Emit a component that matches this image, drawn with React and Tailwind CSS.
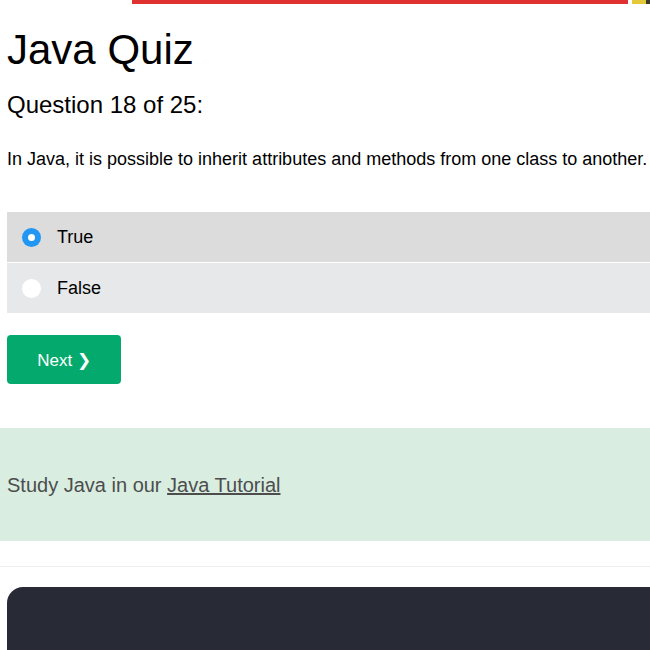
import React, { useState } from 'react';

const options = ['True', 'False'];

const App = () => {
  const [answer, setAnswer] = useState('True');

  return (
    <div className="w-[650px] h-[650px] overflow-hidden bg-white text-black font-['Liberation_Sans',Arial,sans-serif]">
      {/* top banner edge */}
      <div className="flex h-[4px]">
        <div className="w-[132px]" />
        <div className="w-[496px] bg-[#e03131]" />
        <div className="w-[4px] bg-white" />
        <div className="w-[14px] bg-[#e3c93a]" />
        <div className="flex-1 bg-[#3a3a2a]" />
      </div>

      <div className="pl-[7px]">
        <h1 className="text-[42px] leading-[52px] mt-[20px]">Java Quiz</h1>
        <h3 className="text-[24px] leading-[30px] mt-[14px]">Question 18 of 25:</h3>
        <p className="text-[18px] leading-[24px] mt-[27px] whitespace-nowrap">
          In Java, it is possible to inherit attributes and methods from one class to another.
        </p>

        {/* options */}
        <div className="mt-[41px] flex flex-col gap-[1px]">
          {options.map((opt) => {
            const checked = answer === opt;
            return (
              <label
                key={opt}
                onClick={() => setAnswer(opt)}
                className={`flex items-center h-[50px] pl-[15px] cursor-pointer ${
                  checked ? 'bg-[#dcdcdc]' : 'bg-[#e7e8e9]'
                }`}
              >
                <span
                  className={`w-[19px] h-[19px] rounded-full flex items-center justify-center ${
                    checked ? 'bg-[#2196f3]' : 'bg-white'
                  }`}
                >
                  {checked && <span className="w-[7px] h-[7px] rounded-full bg-white" />}
                </span>
                <span className="ml-[16px] text-[18px]">{opt}</span>
              </label>
            );
          })}
        </div>

        <button className="mt-[22px] w-[114px] h-[49px] pt-[2px] rounded-[4px] bg-[#04aa6d] text-white text-[17px]">
          Next ❯
        </button>
      </div>

      {/* tutorial link */}
      <div className="mt-[44px] h-[113px] bg-[#d9eee1] flex items-center pl-[7px]">
        <p className="text-[20px] text-[#4d4d4d]">
          Study Java in our <a href="#" className="underline">Java Tutorial</a>
        </p>
      </div>

      <hr className="mt-[25px] border-t border-[#eeeeee]" />

      <div className="mt-[20px] ml-[7px] h-[100px] rounded-tl-[16px] bg-[#282a35]" />
    </div>
  );
};

export default App;
